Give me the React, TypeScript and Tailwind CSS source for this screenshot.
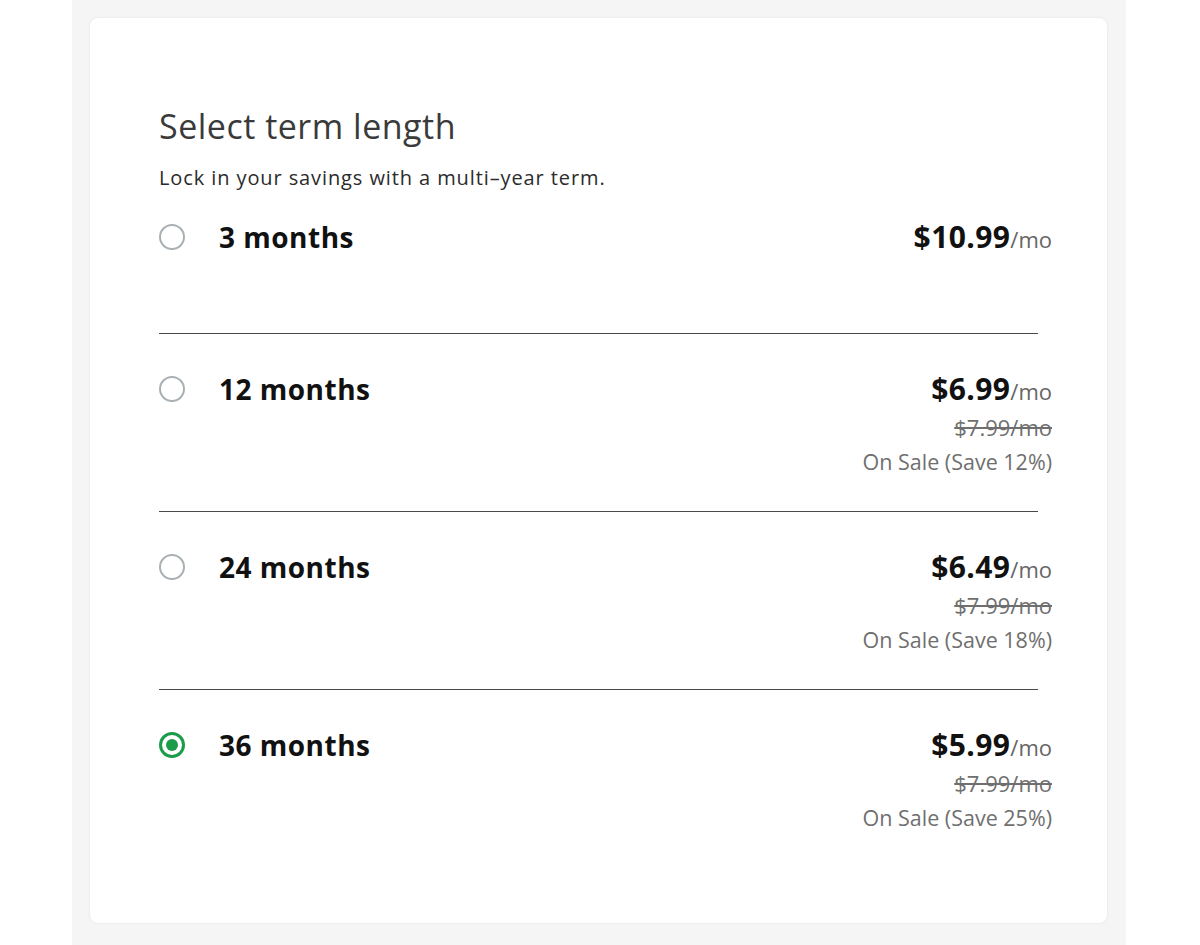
const TERMS = [
  { id: "3", label: "3 months", price: "$10.99" },
  { id: "12", label: "12 months", price: "$6.99", was: "$7.99/mo", save: "On Sale (Save 12%)" },
  { id: "24", label: "24 months", price: "$6.49", was: "$7.99/mo", save: "On Sale (Save 18%)" },
  { id: "36", label: "36 months", price: "$5.99", was: "$7.99/mo", save: "On Sale (Save 25%)" },
];

function Radio({ checked }: { checked: boolean }) {
  if (checked) {
    return (
      <span className="flex h-[26px] w-[26px] shrink-0 items-center justify-center rounded-full border-[3px] border-[#1b9c4b]">
        <span className="h-[12px] w-[12px] rounded-full bg-[#1b9c4b]" />
      </span>
    );
  }
  return <span className="h-[26px] w-[26px] shrink-0 rounded-full border-2 border-[#a9b0b4]" />;
}

export default function App() {
  const selected = "36";

  return (
    <div className="min-h-[945px] bg-white font-['Open_Sans',sans-serif]">
      <div className="ml-[72px] min-h-[945px] w-[1054px] bg-[#f5f5f5] pt-[18px] pr-[19px] pb-[23px] pl-[18px]">
        <div className="rounded-lg bg-white px-[69px] pt-[88px] pb-[91px] shadow-[0_0_3px_rgba(0,0,0,0.08)]">
          <h2 className="text-[34px] leading-[40px] tracking-[0.5px] text-[#3a3a3a]">Select term length</h2>
          <p className="mt-[20px] text-[20px] leading-[24px] tracking-[0.9px] text-[#2b2b2b]">
            Lock in your savings with a multi–year term.
          </p>

          <div className="mt-[31px]">
            {TERMS.map((t, i) => (
              <div
                key={t.id}
                className={
                  i === 0
                    ? "flex items-start justify-between pb-[80px]"
                    : i === TERMS.length - 1
                      ? "flex items-start justify-between border-t border-[#4a4a4a] pt-[39px]"
                      : "flex items-start justify-between border-t border-[#4a4a4a] pt-[39px] pb-[35px]"
                }
              >
                <div className="flex h-[32px] items-center gap-[34px]">
                  <Radio checked={t.id === selected} />
                  <span className="text-[28px] font-bold leading-[32px] tracking-[0.5px] text-[#111]">{t.label}</span>
                </div>
                <div className="-mr-[14px] text-right">
                  <div className="flex h-[32px] items-baseline justify-end">
                    <span className="text-[30px] font-bold leading-[32px] tracking-[0.4px] text-[#111]">{t.price}</span>
                    <span className="text-[22px] leading-[32px] text-[#666]">/mo</span>
                  </div>
                  {t.was && (
                    <div className="mt-[8px] text-[22px] leading-[28px] text-[#6f6f6f] line-through">{t.was}</div>
                  )}
                  {t.save && (
                    <div className="mt-[7px] text-[21.5px] leading-[28px] text-[#6f6f6f]">{t.save}</div>
                  )}
                </div>
              </div>
            ))}
          </div>
        </div>
      </div>
    </div>
  );
}
